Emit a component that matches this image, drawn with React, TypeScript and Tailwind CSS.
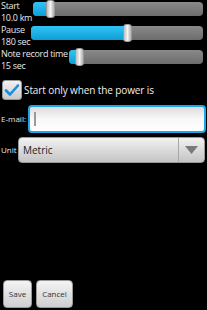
import React from "react"

type SliderProps = { label: string; value: string; thumb: number }

function SliderRow({ label, value, thumb }: SliderProps) {
  return (
    <div className="flex h-[24px] items-start">
      <div className="flex flex-col pl-[1px] text-[9px] leading-[12px] tracking-[-0.3px] text-[#e8e8e8]">
        <span className="whitespace-nowrap">{label}</span>
        <span className="whitespace-nowrap">{value}</span>
      </div>
      <div className="relative ml-[1px] mr-[4px] mt-[2px] h-[14px] flex-1 rounded-[4px] bg-gradient-to-b from-[#8a8a8a] to-[#6c6c6c]">
        {/* blue progress up to the thumb */}
        <div
          className="absolute left-0 top-0 h-[14px] rounded-l-[4px] bg-gradient-to-b from-[#2ec4f5] to-[#0a9fd6]"
          style={{ width: thumb + 4 }}
        ></div>
        <div
          className="absolute top-[-2px] h-[18px] w-[9px] rounded-[3px] border border-[#9a9a9a] bg-gradient-to-r from-[#bdbdbd] via-[#f4f4f4] to-[#b0b0b0]"
          style={{ left: thumb }}
        ></div>
      </div>
    </div>
  )
}

export default function App() {
  return (
    <div
      className="flex h-[310px] w-[207px] flex-col overflow-hidden bg-black"
      style={{ fontFamily: '"Open Sans", "Noto Sans", sans-serif' }}
    >
      <SliderRow label="Start" value="10.0 km" thumb={13} />
      <SliderRow label="Pause" value="180 sec" thumb={92} />
      <SliderRow label="Note record time" value="15 sec" thumb={6} />

      <div className="mt-[8px] flex items-center">
        <div className="ml-[2px] flex h-[20px] w-[20px] items-center justify-center rounded-[3px] border border-[#999] bg-gradient-to-b from-[#f2f2f2] to-[#c8c8c8]">
          <svg width="16" height="14" viewBox="0 0 16 14">
            <path d="M2 7.5 L6 11.5 L14 2.5" fill="none" stroke="#1a8fd8" strokeWidth="2.6" strokeLinecap="round" strokeLinejoin="round" />
          </svg>
        </div>
        <span className="ml-[2px] text-[10px] tracking-[-0.1px] text-[#f0f0f0]">Start only when the power is</span>
      </div>

      <div className="mt-[5px] flex items-center">
        <span className="w-[28px] pl-[1px] text-[8px] text-[#e8e8e8]">E-mail:</span>
        <div className="mr-[1px] flex h-[28px] flex-1 items-center rounded-[4px] border-2 border-[#1ea6e8] bg-gradient-to-b from-[#dcdcdc] via-[#f8f8f8] to-[#ffffff] pl-[4px]">
          <div className="h-[14px] w-[2px] bg-[#9a9a9a]"></div>
        </div>
      </div>

      <div className="mt-[4px] flex items-center">
        <span className="w-[18px] pl-[1px] text-[8px] text-[#e8e8e8]">Unit</span>
        <div className="mr-[2px] flex h-[26px] flex-1 items-stretch rounded-[4px] border border-[#999] bg-gradient-to-b from-[#f2f2f2] to-[#c4c4c4]">
          <span className="flex flex-1 items-center pl-[4px] text-[10px] text-[#222]">Metric</span>
          <div className="w-[1px] bg-[#a8a8a8]"></div>
          <div className="flex w-[25px] items-center justify-center">
            <svg width="13" height="8" viewBox="0 0 13 8">
              <path d="M0 0 L13 0 L6.5 8 Z" fill="#7a7a7a" />
            </svg>
          </div>
        </div>
      </div>

      <div className="mb-[2px] mt-auto flex gap-[4px] pl-[3px]">
        <button className="flex h-[28px] w-[29px] items-center justify-center rounded-[4px] border border-[#999] bg-gradient-to-b from-[#f4f4f4] to-[#cfcfcf] text-[8px] text-[#333]">
          Save
        </button>
        <button className="flex h-[28px] w-[37px] items-center justify-center rounded-[4px] border border-[#999] bg-gradient-to-b from-[#f4f4f4] to-[#cfcfcf] text-[8px] text-[#333]">
          Cancel
        </button>
      </div>
    </div>
  )
}
